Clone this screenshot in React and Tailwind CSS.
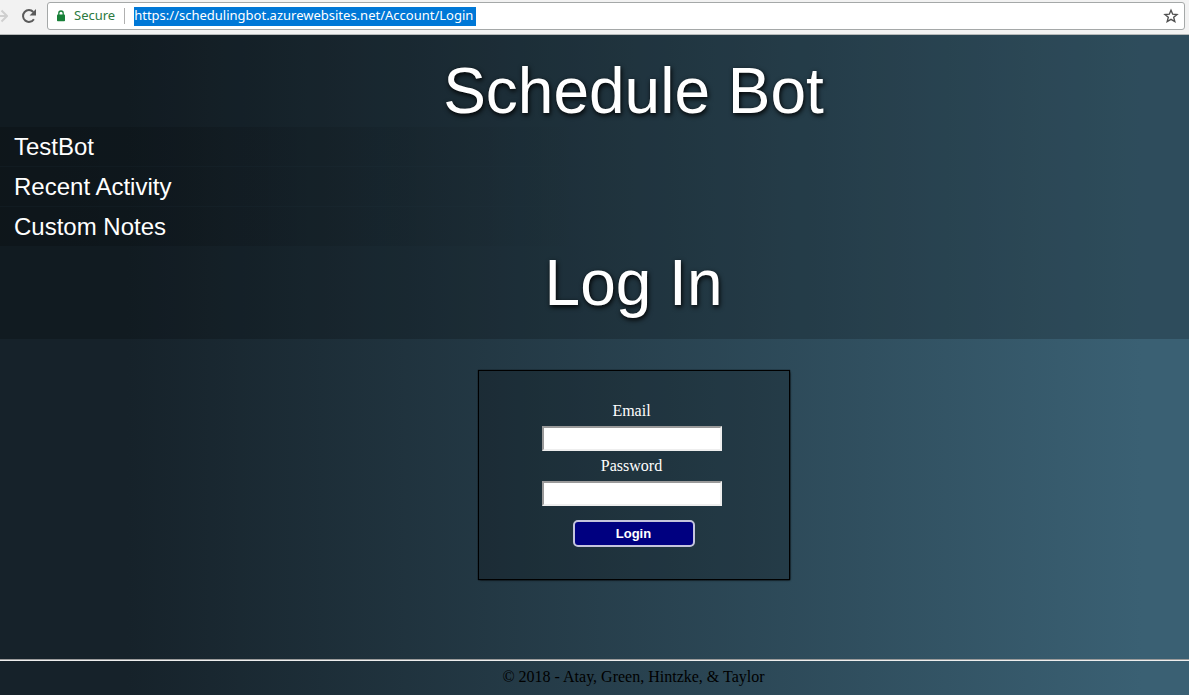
import React from 'react';

const navItems = ['TestBot', 'Recent Activity', 'Custom Notes'];

function BrowserBar() {
  return (
    <div className="flex h-[35px] shrink-0 items-start gap-2 border-b border-[#b6b9b9] bg-[#f2f2f2] pr-1 pt-[2px] font-['Noto_Sans',sans-serif] text-[13px]">
      <div className="flex h-7 w-[39px] shrink-0 items-center justify-between">
        <button type="button" aria-label="Forward">
          <svg width="8" height="16" viewBox="0 0 8 16" fill="none" stroke="#cfcfcf" strokeWidth="2">
            <path d="M0 8H7M1.5 2.5L7 8L1.5 13.5" />
          </svg>
        </button>
        <button type="button" aria-label="Reload" className="mr-[2px]">
          <svg width="16" height="16" viewBox="0 0 16 16">
            <path d="M12.9 11.2A5.9 5.9 0 1 1 12.3 4" fill="none" stroke="#5a5a5a" strokeWidth="2" />
            <path d="M15 1v6.4H8.6z" fill="#5a5a5a" />
          </svg>
        </button>
      </div>
      <div className="flex h-7 min-w-0 flex-1 items-center rounded-[3px] border border-[#a5a8a8] bg-white pl-2 pr-[5px]">
        <svg width="10" height="12" viewBox="0 0 10 12" className="shrink-0">
          <rect x="1" y="4.6" width="8" height="6.6" rx="0.8" fill="#188038" />
          <path d="M2.8 5V3.2a2.2 2.2 0 0 1 4.4 0V5" fill="none" stroke="#188038" strokeWidth="1.3" />
        </svg>
        <span className="ml-2 text-[#2c7a3f]">Secure</span>
        <span className="mx-[9px] h-4 w-px bg-[#b0b0b0]" />
        <input
          type="text"
          aria-label="Address"
          defaultValue="https://schedulingbot.azurewebsites.net/Account/Login"
          className="h-[19px] [field-sizing:content] bg-[#0078d7] pr-[3px] text-white outline-none"
        />
        <button type="button" aria-label="Bookmark this page" className="ml-auto">
          <svg width="16" height="16" viewBox="0 0 16 16" fill="none" stroke="#505050" strokeWidth="1.4">
            <path d="M8 2.2L9.7 6.2L14 6.5L10.7 9.3L11.8 13.6L8 11.3L4.2 13.6L5.3 9.3L2 6.5L6.3 6.2Z" />
          </svg>
        </button>
      </div>
    </div>
  );
}

function Title({ children }) {
  return (
    <h1 className="pl-[78px] text-center text-[64px] leading-[72px] [text-shadow:1px_2px_5px_#000]">
      {children}
    </h1>
  );
}

const inputClass =
  'h-[25px] w-[180px] border-2 border-b-[#eeeeee] border-l-[#9a9a9a] border-r-[#eeeeee] border-t-[#9a9a9a] bg-white px-1 text-[13px] text-black outline-none';

export default function App() {
  return (
    <div className="flex min-h-screen flex-col">
      <BrowserBar />
      <div className="flex flex-1 flex-col bg-[linear-gradient(to_right,#16222a_10.7%,#3a6073_96%)]">
        <header className="bg-black/20 py-5 font-['Liberation_Sans',Arial,sans-serif] text-white">
          <Title>Schedule Bot</Title>
          <nav className="mb-px flex flex-col gap-px">
            {navItems.map((item) => (
              <a
                key={item}
                href="#"
                className="block bg-[linear-gradient(to_right,rgba(0,0,0,0.2),rgba(0,0,0,0)_50%)] pl-[14px] text-2xl leading-[39px]"
              >
                {item}
              </a>
            ))}
          </nav>
          <Title>Log In</Title>
        </header>

        <main className="flex flex-1 justify-center pb-20 pl-[78px] pt-8 font-['Liberation_Serif',serif] text-base">
          <form
            onSubmit={(e) => e.preventDefault()}
            className="flex w-[310px] flex-col items-center self-start bg-black/20 pb-8 pt-[31px] text-white shadow-[0_0_1px_1px_#000,1px_1px_2px_#000]"
          >
            <div className="flex flex-col items-center pr-1">
              <label htmlFor="email" className="leading-[18px]">Email</label>
              <input id="email" type="email" className={`${inputClass} mt-[6px]`} />
              <label htmlFor="password" className="mt-[6px] leading-[18px]">Password</label>
              <input id="password" type="password" className={`${inputClass} mt-[6px]`} />
            </div>
            <button
              type="submit"
              className="mt-[14px] h-[27px] w-[122px] rounded-[5px] border-2 border-[#c4c4dc] bg-[#000080] font-['Liberation_Sans',Arial,sans-serif] text-[13px] font-bold"
            >
              Login
            </button>
          </form>
        </main>

        <footer className="border-t border-[#9a9a9a] font-['Liberation_Serif',serif] text-base text-black">
          <p className="border-t border-[#eeeeee] pb-[9px] pl-[78px] pt-[6px] text-center leading-[19px]">
            © 2018 - Atay, Green, Hintzke, &amp; Taylor
          </p>
        </footer>
      </div>
    </div>
  );
}
